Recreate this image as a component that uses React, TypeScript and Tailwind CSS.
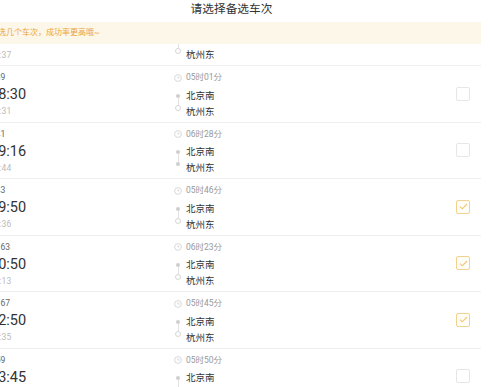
const font = { fontFamily: "Roboto, 'Noto Sans CJK SC', sans-serif" };

type Train = {
  no: string;
  dep: string;
  arr: string;
  dur: string;
  endFilled: boolean;
  checked: boolean;
};

const trains: Train[] = [
  { no: "G35", dep: "07:00", arr: "11:37", dur: "04时37分", endFilled: false, checked: false },
  { no: "G39", dep: "08:30", arr: "13:31", dur: "05时01分", endFilled: false, checked: false },
  { no: "G41", dep: "09:16", arr: "15:44", dur: "06时28分", endFilled: true, checked: false },
  { no: "G43", dep: "09:50", arr: "15:36", dur: "05时46分", endFilled: false, checked: true },
  { no: "G163", dep: "10:50", arr: "17:13", dur: "06时23分", endFilled: false, checked: true },
  { no: "G167", dep: "12:50", arr: "18:35", dur: "05时45分", endFilled: false, checked: true },
  { no: "G59", dep: "13:45", arr: "19:35", dur: "05时50分", endFilled: false, checked: false },
];

function Clock() {
  return (
    <svg width="8" height="8" viewBox="0 0 8 8" fill="none">
      <circle cx="4" cy="4" r="3.4" stroke="#cfcfcf" strokeWidth="0.8" />
      <path d="M4 2.2V4h1.5" stroke="#cfcfcf" strokeWidth="0.8" />
    </svg>
  );
}

function Checkbox({ checked }: { checked: boolean }) {
  if (!checked) {
    return <div className="w-[14px] h-[14px] rounded-[2px] border border-[#e6e6e6] bg-white" />;
  }
  return (
    <div className="w-[14px] h-[14px] rounded-[2px] border border-[#f1d28e] bg-[#fffdf7] flex items-center justify-center">
      <svg width="9" height="7" viewBox="0 0 9 7" fill="none">
        <path d="M1 3.6l2.3 2.2L8 1" stroke="#eec676" strokeWidth="1.1" />
      </svg>
    </div>
  );
}

function Row({ t, first }: { t: Train; first?: boolean }) {
  return (
    <div
      className={`flex h-[56.5px] border-b border-[#eeeeee] pl-[8px] pr-[11px] ${
        first ? "-mt-[34px]" : ""
      }`}
    >
      <div className="w-[183px] shrink-0 pt-[5px] flex flex-col">
        <div className="h-[13px] leading-[13px] text-[8.5px] text-[#666]">{t.no}</div>
        <div className="h-[22px] leading-[22px] text-[14.5px] text-[#333]">{t.dep}</div>
        <div className="h-[11px] leading-[11px] text-[8.5px] text-[#bbb]">{t.arr}</div>
      </div>
      <div className="flex-1 pt-[5px] flex flex-col">
        <div className="h-[13px] flex items-center">
          <div className="w-[10px] flex justify-center">
            <Clock />
          </div>
          <span className="ml-[3px] text-[8.5px] text-[#999]">{t.dur}</span>
        </div>
        <div className="mt-[3.5px] flex">
          <div className="w-[10px] flex flex-col items-center">
            <div className="h-[16px] flex items-center">
              <div className="w-[4px] h-[4px] rounded-full bg-[#cfcfcf]" />
            </div>
            <div className="w-[1px] h-[8px] -my-[6px] bg-[#e2e2e2]" />
            <div className="h-[16px] flex items-center">
              {t.endFilled ? (
                <div className="w-[4px] h-[4px] rounded-full bg-[#cfcfcf]" />
              ) : (
                <div className="w-[6px] h-[6px] rounded-full border border-[#d6d6d6] bg-white" />
              )}
            </div>
          </div>
          <div className="ml-[3px] flex flex-col text-[9.5px] text-[#333]">
            <div className="h-[16px] leading-[16px]">北京南</div>
            <div className="h-[16px] leading-[16px]">杭州东</div>
          </div>
        </div>
      </div>
      <div className="flex items-center">
        <Checkbox checked={t.checked} />
      </div>
    </div>
  );
}

export default function App() {
  return (
    <div className="w-[490px] h-[387px] overflow-hidden bg-white" style={font}>
      <div className="w-[499px] -ml-[18px] h-full flex flex-col">
        <div className="h-[22px] shrink-0 flex items-center justify-center pb-[2px] text-[11.7px] text-[#333]">
          请选择备选车次
        </div>
        <div className="h-[21.5px] shrink-0 bg-[#fdf7ea] flex items-center pl-[8px] text-[8px] text-[#eaa43a]">
          多选几个车次，成功率更高哦~
        </div>
        <div className="flex-1 overflow-hidden">
          {trains.map((t, i) => (
            <Row key={t.no} t={t} first={i === 0} />
          ))}
        </div>
      </div>
    </div>
  );
}
